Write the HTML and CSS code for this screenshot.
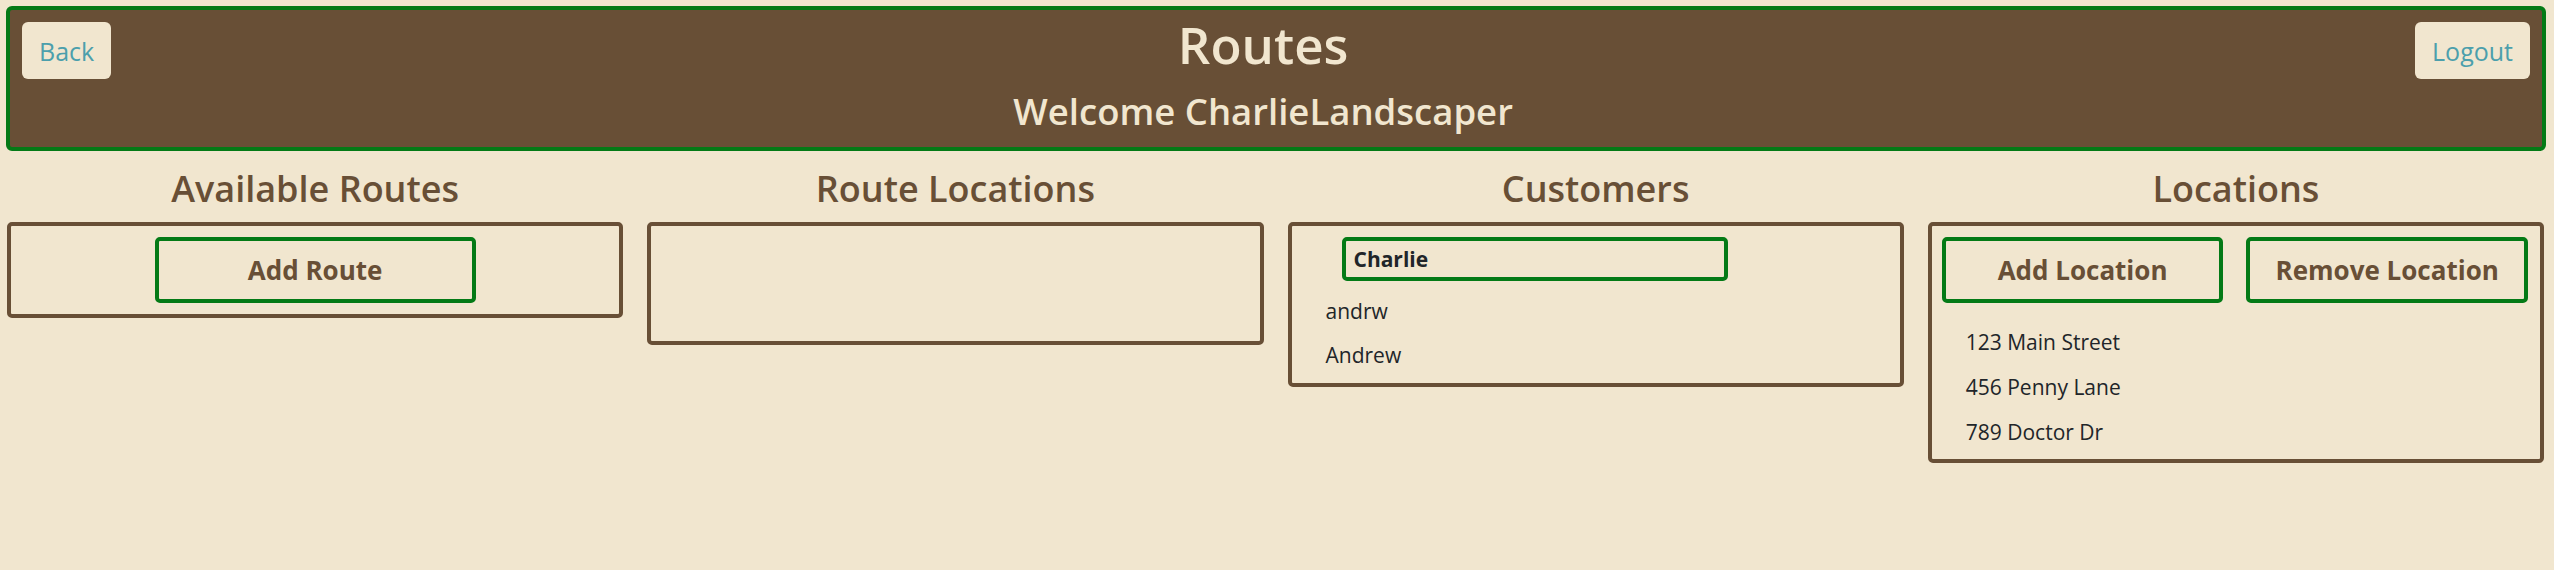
FILE: index.html
```html
<!DOCTYPE html>
<html lang="en">
<head>
<meta charset="utf-8">
<title>Routes</title>
<link rel="stylesheet" href="styles.css">
</head>
<body>
<header class="topbar">
  <button class="nav-btn">Back</button>
  <div class="title-block">
    <h1 class="title">Routes</h1>
    <h3 class="welcome">Welcome CharlieLandscaper</h3>
  </div>
  <button class="nav-btn">Logout</button>
</header>
<main class="columns">
  <section class="column">
    <h3 class="col-title">Available Routes</h3>
    <div class="panel panel-routes">
      <button class="action-btn wide">Add Route</button>
    </div>
  </section>
  <section class="column">
    <h3 class="col-title">Route Locations</h3>
    <div class="panel panel-empty"></div>
  </section>
  <section class="column">
    <h3 class="col-title">Customers</h3>
    <div class="panel panel-customers">
      <ul class="list">
        <li class="item selected">Charlie</li>
        <li class="item">andrw</li>
        <li class="item">Andrew</li>
      </ul>
    </div>
  </section>
  <section class="column">
    <h3 class="col-title">Locations</h3>
    <div class="panel panel-locations">
      <div class="btn-row">
        <button class="action-btn">Add Location</button>
        <button class="action-btn">Remove Location</button>
      </div>
      <ul class="list loc-list">
        <li class="item">123 Main Street</li>
        <li class="item">456 Penny Lane</li>
        <li class="item">789 Doctor Dr</li>
      </ul>
    </div>
  </section>
</main>
</body>
</html>
```
FILE: styles.css
```css
* { box-sizing: border-box; }
html, body {
  margin: 0;
  padding: 0;
  background: #f1e6cf;
  font-family: "Open Sans", "Noto Sans", sans-serif;
  color: #212529;
}
body { height: 570px; overflow: hidden; }

.topbar {
  display: flex;
  align-items: flex-start;
  margin: 6px 8px 0 6px;
  padding: 0 12px;
  height: 145px;
  background: #684f36;
  border: 4px solid #047a16;
  border-radius: 6px;
}
.nav-btn {
  margin-top: 12px;
  height: 57px;
  padding: 0 17px;
  background: #f1e6cf;
  color: #4c9fac;
  border: none;
  border-radius: 6px;
  font-family: inherit;
  font-size: 25px;
  font-weight: 400;
}
.title-block {
  flex: 1;
  text-align: center;
  color: #f1e6cf;
}
.title {
  margin: 3px 0 0;
  font-size: 51px;
  font-weight: 600;
  line-height: 1.22;
}
.welcome {
  margin: 15px 0 0;
  font-size: 36.5px;
  font-weight: 600;
  line-height: 1.2;
}

.columns {
  display: grid;
  grid-template-columns: repeat(4, 1fr);
  column-gap: 24px;
  align-items: start;
  margin: 0 10px 0 7px;
}
.col-title {
  margin: 16px 0 12px;
  text-align: center;
  font-size: 36px;
  font-weight: 600;
  line-height: 1.2;
  color: #684f36;
}
.panel {
  border: 4px solid #684f36;
  border-radius: 5px;
}
.panel-routes {
  display: flex;
  justify-content: center;
  align-items: center;
  height: 96px;
}
.panel-empty { height: 123px; }
.panel-customers { height: 165px; padding: 11px 0 0; }
.panel-locations { height: 241px; padding: 11px 0 0; }

.action-btn {
  height: 66px;
  background: transparent;
  border: 4px solid #047a16;
  border-radius: 5px;
  color: #684f36;
  font-family: inherit;
  font-size: 26px;
  font-weight: 700;
}
.action-btn.wide { width: 321px; }

.btn-row {
  display: grid;
  grid-template-columns: 1fr 1fr;
  column-gap: 23px;
  padding: 0 12px 0 10px;
}

.list {
  list-style: none;
  margin: 0;
  padding: 0;
}
.item {
  height: 44px;
  line-height: 44px;
  padding-left: 34px;
  font-size: 21px;
}
.item.selected {
  width: 386px;
  margin: 0 0 8px 50px;
  padding-left: 8px;
  line-height: 36px;
  border: 4px solid #047a16;
  border-radius: 5px;
  font-weight: 700;
}
.loc-list { margin-top: 17px; }
.loc-list .item { height: 45px; line-height: 45px; }
```
